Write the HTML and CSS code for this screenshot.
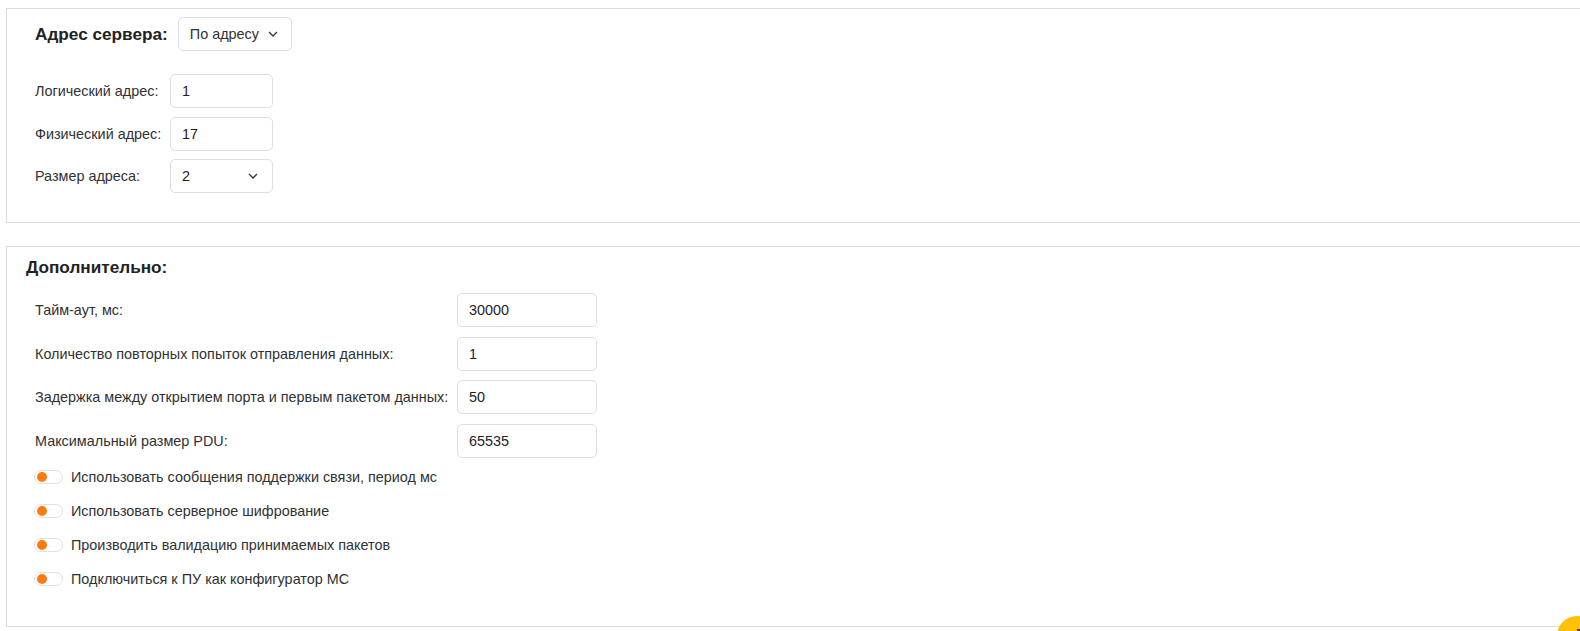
FILE: index.html
```html
<!DOCTYPE html>
<html lang="ru">
<head>
<meta charset="utf-8">
<link rel="stylesheet" href="styles.css">
</head>
<body>
<div class="page">
  <section class="panel panel-server">
    <div class="server-head">
      <span class="head-title">Адрес сервера:</span>
      <div class="select select-mode">
        <span>По адресу</span>
        <svg class="chev" width="10" height="6" viewBox="0 0 10 6"><path d="M1 1l4 4 4-4" fill="none" stroke="#333" stroke-width="1.3"/></svg>
      </div>
    </div>
    <div class="rows rows-server">
      <div class="row">
        <span class="label label-short">Логический адрес:</span>
        <div class="input input-short">1</div>
      </div>
      <div class="row">
        <span class="label label-short">Физический адрес:</span>
        <div class="input input-short">17</div>
      </div>
      <div class="row">
        <span class="label label-short">Размер адреса:</span>
        <div class="input input-short select-size">
          <span>2</span>
          <svg class="chev" width="10" height="6" viewBox="0 0 10 6"><path d="M1 1l4 4 4-4" fill="none" stroke="#333" stroke-width="1.3"/></svg>
        </div>
      </div>
    </div>
  </section>

  <section class="panel panel-extra">
    <div class="extra-title">Дополнительно:</div>
    <div class="rows rows-extra">
      <div class="row row-tall">
        <span class="label label-long">Тайм-аут, мс:</span>
        <div class="input input-long">30000</div>
      </div>
      <div class="row row-tall">
        <span class="label label-long">Количество повторных попыток отправления данных:</span>
        <div class="input input-long">1</div>
      </div>
      <div class="row row-tall">
        <span class="label label-long">Задержка между открытием порта и первым пакетом данных:</span>
        <div class="input input-long">50</div>
      </div>
      <div class="row row-tall">
        <span class="label label-long">Максимальный размер PDU:</span>
        <div class="input input-long">65535</div>
      </div>
    </div>
    <div class="toggles">
      <div class="toggle-row"><span class="switch"><span class="knob"></span></span><span class="toggle-text">Использовать сообщения поддержки связи, период мс</span></div>
      <div class="toggle-row"><span class="switch"><span class="knob"></span></span><span class="toggle-text">Использовать серверное шифрование</span></div>
      <div class="toggle-row"><span class="switch"><span class="knob"></span></span><span class="toggle-text">Производить валидацию принимаемых пакетов</span></div>
      <div class="toggle-row"><span class="switch"><span class="knob"></span></span><span class="toggle-text">Подключиться к ПУ как конфигуратор МС</span></div>
    </div>
  </section>
</div>
<div class="fab"><span class="fab-mark"></span></div>
</body>
</html>
```

FILE: styles.css
```css
html, body {
  margin: 0;
  padding: 0;
  background: #fff;
  overflow: hidden;
  height: 631px;
}
body {
  font-family: "Liberation Sans", Arial, sans-serif;
  color: #303133;
  font-size: 14.4px;
}
.page {
  padding: 8px 0 0 6px;
  display: flex;
  flex-direction: column;
  gap: 23px;
}
.panel {
  border: 1px solid #dcdcdc;
  border-right: none;
  background: #fff;
  box-sizing: border-box;
}
.panel-server {
  height: 215px;
  padding: 8px 0 0 28px;
}
.server-head {
  display: flex;
  align-items: center;
  gap: 10px;
  height: 34px;
}
.head-title {
  font-weight: bold;
  font-size: 17.2px;
  color: #222;
}
.select {
  display: flex;
  align-items: center;
  justify-content: space-between;
  box-sizing: border-box;
  border: 1px solid #dcdfe6;
  border-radius: 5px;
  height: 34px;
  background: #fff;
}
.select-mode {
  width: 114px;
  padding: 0 13px 0 11px;
  color: #303133;
}
.chev { display: block; }
.rows {
  display: flex;
  flex-direction: column;
  gap: 8.5px;
}
.rows-server {
  margin-top: 23px;
}
.row {
  display: flex;
  align-items: center;
  height: 34px;
}
.row-tall {
  height: 34px;
}
.rows-extra {
  margin-top: 16px;
  padding-left: 9px;
  gap: 9.5px;
}
.label {
  flex: none;
}
.label-short { width: 135px; }
.label-long { width: 422px; }
.input {
  box-sizing: border-box;
  height: 100%;
  border: 1px solid #dcdfe6;
  border-radius: 5px;
  padding: 0 11px;
  display: flex;
  align-items: center;
  background: #fff;
  color: #222;
}
.input-short { width: 103px; }
.input-long { width: 140px; }
.select-size {
  justify-content: space-between;
  padding-right: 14px;
}
.panel-extra {
  height: 381px;
  padding: 10px 0 0 19px;
}
.extra-title {
  font-weight: bold;
  font-size: 17.2px;
  color: #222;
  line-height: 20px;
}
.toggles {
  margin-top: 9px;
  padding-left: 8px;
  display: flex;
  flex-direction: column;
  gap: 14px;
}
.toggle-row {
  display: flex;
  align-items: center;
  height: 20px;
  gap: 8px;
}
.switch {
  box-sizing: border-box;
  width: 29px;
  height: 14px;
  border: 1px solid #e2e2e2;
  border-radius: 7px;
  background: #fff;
  display: flex;
  align-items: center;
  padding-left: 2px;
}
.knob {
  width: 10px;
  height: 10px;
  border-radius: 50%;
  background: #ff7b10;
}
.toggle-text {
  color: #303133;
}
.fab {
  position: fixed;
  left: 1557px;
  top: 616px;
  width: 40px;
  height: 40px;
  border-radius: 50%;
  background: #ffc107;
}
.fab-mark {
  position: absolute;
  left: 20px;
  top: 13px;
  width: 10px;
  height: 2px;
  background: #5a4200;
}
```
